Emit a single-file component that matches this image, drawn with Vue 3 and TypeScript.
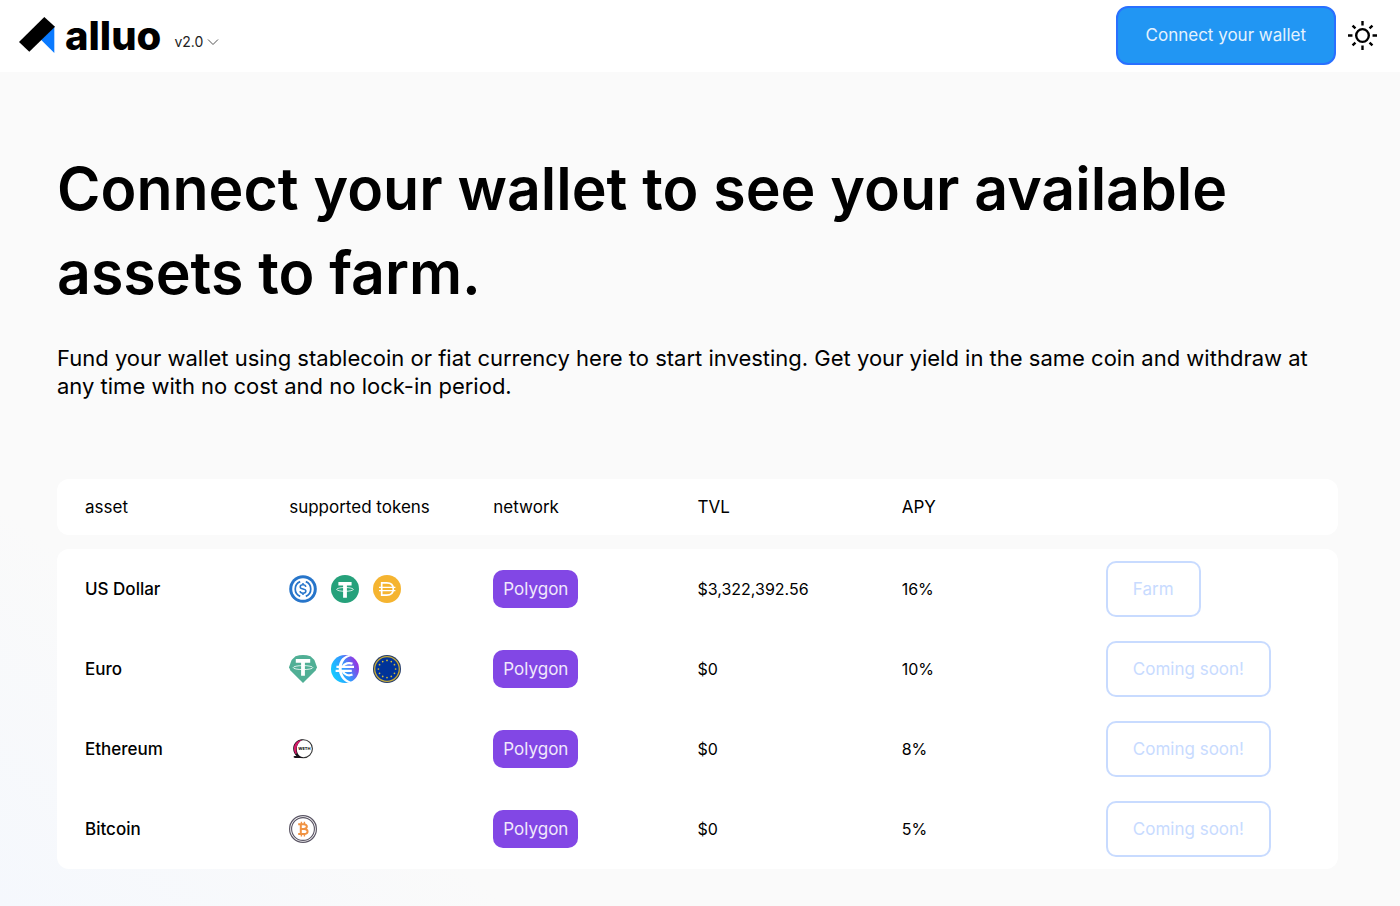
<script setup lang="ts">
type Token = 'usdc' | 'usdt' | 'dai' | 'eurt' | 'eurs' | 'jeur' | 'weth' | 'wbtc'

interface Asset {
  name: string
  tokens: Token[]
  network: string
  tvl: string
  apy: string
  action: string
}

const columns: string[] = ['asset', 'supported tokens', 'network', 'TVL', 'APY', '']

const assets: Asset[] = [
  { name: 'US Dollar', tokens: ['usdc', 'usdt', 'dai'], network: 'Polygon', tvl: '$3,322,392.56', apy: '16%', action: 'Farm' },
  { name: 'Euro', tokens: ['eurt', 'eurs', 'jeur'], network: 'Polygon', tvl: '$0', apy: '10%', action: 'Coming soon!' },
  { name: 'Ethereum', tokens: ['weth'], network: 'Polygon', tvl: '$0', apy: '8%', action: 'Coming soon!' },
  { name: 'Bitcoin', tokens: ['wbtc'], network: 'Polygon', tvl: '$0', apy: '5%', action: 'Coming soon!' },
]

const stars = Array.from({ length: 12 }, (_, i) => {
  const angle = (i * Math.PI) / 6
  return { x: 14 + 8.6 * Math.sin(angle), y: 14 - 8.6 * Math.cos(angle) }
})
</script>

<template>
  <div class="page">
    <header class="topbar">
      <a class="brand" href="#">
        <svg class="mark" viewBox="0 0 36 36" aria-hidden="true">
          <path d="M35.3 9.5V36L22 22.8Z" fill="#0a7aff" />
          <path d="M25.3 0 36 9.7 10.3 34.7 0 25Z" fill="#000" />
        </svg>
        <span class="wordmark">alluo</span>
      </a>
      <button class="version" type="button">
        v2.0
        <svg class="chevron" viewBox="0 0 12 8" aria-hidden="true">
          <path d="M1 1.5 6 6.5 11 1.5" fill="none" stroke="#555" stroke-width="1" />
        </svg>
      </button>
      <button class="connect" type="button">Connect your wallet</button>
      <button class="theme" type="button" aria-label="Toggle theme">
        <svg viewBox="0 0 28 28" aria-hidden="true">
          <g fill="none" stroke="#000" stroke-width="2.3">
            <circle cx="14" cy="14" r="6.1" />
            <path d="M14 0v4.3M14 23.7V28M0 14h4.3M23.7 14H28M4.4 4.4l2.8 2.8M20.8 20.8l2.8 2.8M4.4 23.6l2.8-2.8M20.8 7.2l2.8-2.8" />
          </g>
        </svg>
      </button>
    </header>

    <main class="content">
      <h1>Connect your wallet to see your available assets to farm.</h1>
      <p class="lead">
        Fund your wallet using stablecoin or fiat currency here to start investing. Get your yield in the same coin and
        withdraw at any time with no cost and no lock-in period.
      </p>

      <table class="assets">
        <thead>
          <tr>
            <th v-for="column in columns" :key="column" scope="col">{{ column }}</th>
          </tr>
        </thead>
        <tbody>
          <tr v-for="asset in assets" :key="asset.name">
            <th scope="row">{{ asset.name }}</th>
            <td class="tokens">
              <svg v-for="token in asset.tokens" :key="token" class="token" viewBox="0 0 28 28" aria-hidden="true">
                <template v-if="token === 'usdc'">
                  <circle cx="14" cy="14" r="13.8" fill="#2775ca" />
                  <circle cx="14" cy="14" r="10.8" fill="#fff" />
                  <g fill="none" stroke="#2775ca">
                    <path d="M11.2 6.6a8 8 0 0 0 0 14.8M16.8 6.6a8 8 0 0 1 0 14.8" stroke-width="1.7" />
                    <path d="M16.8 11.8c-.2-1.3-1.2-2-2.8-2-1.7 0-2.8.8-2.8 2.1 0 2.9 5.7 1.3 5.7 4.2 0 1.3-1.2 2.1-2.9 2.1s-2.8-.8-3-2.1M14 7.9v2M14 18.1v2" stroke-width="1.5" />
                  </g>
                </template>
                <template v-else-if="token === 'usdt'">
                  <circle cx="14" cy="14" r="14" fill="#26a17b" />
                  <path d="M7.4 6.9h13.2v3.6h-4.7v12.2h-3.8V10.5H7.4Z" fill="#fff" />
                  <ellipse cx="14" cy="14.4" rx="8.3" ry="1.9" fill="none" stroke="#fff" stroke-width=".8" />
                </template>
                <template v-else-if="token === 'dai'">
                  <circle cx="14" cy="14" r="14" fill="#f5b430" />
                  <g fill="none" stroke="#fff" stroke-width="1.7">
                    <path d="M8.7 7.9h5.1c4.1 0 6.5 2.5 6.5 6.1s-2.4 6.1-6.5 6.1H8.7Z" />
                    <path d="M6 12.4h16.4M6 15.6h16.4" stroke-width="1.3" />
                  </g>
                </template>
                <template v-else-if="token === 'eurt'">
                  <path d="M6.5 1.2Q14-1 21.5 1.2L25.4 5 28 12.2 26.6 15.6 14 28 1.4 15.6 0 12.2 2.6 5Z" fill="#50af95" />
                  <path d="M6.8 4h14.4v3.7h-5.3v13.1h-3.8V7.7H6.8Z" fill="#fff" />
                  <ellipse cx="14" cy="12.6" rx="9.8" ry="2" fill="none" stroke="#fff" stroke-width=".8" />
                </template>
                <template v-else-if="token === 'eurs'">
                  <defs>
                    <linearGradient id="eurs-fill" x1="0" y1=".7" x2="1" y2=".25">
                      <stop offset="0" stop-color="#10cfff" />
                      <stop offset=".5" stop-color="#329bff" />
                      <stop offset="1" stop-color="#a422dc" />
                    </linearGradient>
                  </defs>
                  <circle cx="14" cy="14" r="14" fill="url(#eurs-fill)" />
                  <path d="M18 0C10.2 1.6 7.6 7.6 7.7 13.6c.1 6.6 3.6 12 9.3 14.2 1.8.3 3.2 0 4.6-.7-6.4-1.4-10.7-6-10.9-12.9C10.6 7.8 13.2 2.6 20.5 1Z" fill="#fff" />
                  <path d="M21.5 8.8c-3.7-1.6-8-.6-9.800 3M21.5 19.6c-3.7 1.5-8 .5-9.800-3.300" fill="none" stroke="#fff" stroke-width="2.2" />
                  <path d="M5.4 11.9H23M4.6 15.9h16.2" stroke="#fff" stroke-width="2.2" />
                </template>
                <template v-else-if="token === 'jeur'">
                  <circle cx="14" cy="14" r="14" fill="#263c68" />
                  <circle cx="14" cy="14" r="12.3" fill="#003399" stroke="#c5aa3b" stroke-width="1.3" />
                  <circle v-for="(star, i) in stars" :key="i" :cx="star.x" :cy="star.y" r=".85" fill="#d6bd32" />
                </template>
                <template v-else-if="token === 'weth'">
                  <circle cx="14.4" cy="13.8" r="9" fill="#fff" stroke="#333" stroke-width="1.1" />
                  <path d="M14.5 4.3C8 4 4 8.8 4.2 14c.1 2.7 1.3 5.1 3.2 6.900l-2 .2c-1.4.4-1.2 1.6.6 1.8h8.6C10.3 21.7 7.8 18.5 7.8 14c0-4.4 2.8-8 6.7-9.7Z" fill="#18131a" />
                  <path d="M13 4.9C8 5 4.7 9.2 4.9 14c.1 2 .8 3.9 2 5.3.4-.3.7-.8.9-1.4C6.3 13 8.4 7.5 13 4.900Z" fill="#d51c68" />
                  <text x="15.4" y="15.4" class="weth-label">WETH</text>
                </template>
                <template v-else>
                  <circle cx="14" cy="14" r="13.4" fill="#fff" stroke="#5a5564" stroke-width="1.2" />
                  <circle cx="14" cy="14" r="11.4" fill="none" stroke="#5a5564" stroke-width="1.1" />
                  <g fill="none" stroke="#f09242" stroke-width="2">
                    <path d="M9.2 9.2h5.5c4.3 0 4.1 4.7 0 4.7h-2.5M9.2 19h6c4.6 0 4.4-5.1 0-5.1M11.8 9v10" />
                    <path d="M12.4 6.7V9M15.4 6.7V9M12.4 19v2.5M15.4 19v2.5" stroke-width="1.4" />
                  </g>
                </template>
              </svg>
            </td>
            <td><span class="network">{{ asset.network }}</span></td>
            <td>{{ asset.tvl }}</td>
            <td>{{ asset.apy }}</td>
            <td><button class="action" type="button" disabled>{{ asset.action }}</button></td>
          </tr>
        </tbody>
      </table>
    </main>
  </div>
</template>

<style>
body {
  margin: 0;
}
</style>

<style scoped>
.page {
  box-sizing: border-box;
  min-height: 100vh;
  background: linear-gradient(38deg, #f5f8fd 0%, #fafafa 20%);
  color: #000;
  font-family: Inter, "Liberation Sans", sans-serif;
  font-size: 16px;
}

button {
  font-family: inherit;
  cursor: pointer;
}

.topbar {
  display: flex;
  align-items: center;
  box-sizing: border-box;
  height: 72px;
  padding: 0 23px 2px 19px;
  background: #fff;
}

.brand {
  display: flex;
  align-items: center;
  gap: 10px;
  color: #000;
  text-decoration: none;
}

.mark {
  width: 36px;
  height: 36px;
}

.wordmark {
  padding-top: 2px;
  font-size: 40px;
  font-weight: 800;
  line-height: 48px;
}

.version {
  display: flex;
  align-items: center;
  gap: 4px;
  margin-left: 13px;
  padding: 14px 0 0;
  border: 0;
  background: none;
  color: #222;
  font-size: 14px;
  line-height: 20px;
}

.chevron {
  width: 12px;
  height: 8px;
}

.connect {
  margin-left: auto;
  padding: 17px 28px;
  border: 2px solid #2970ff;
  border-radius: 12px;
  background: #2196f3;
  color: #e4f2fe;
  font-size: 17px;
  line-height: 21px;
}

.theme {
  display: flex;
  margin-left: 12px;
  padding: 0;
  border: 0;
  background: none;
}

.theme svg {
  width: 29px;
  height: 29px;
}

.content {
  padding: 75px 62px 36px 57px;
}

h1 {
  margin: 0;
  font-size: 59px;
  font-weight: 600;
  line-height: 84px;
}

.lead {
  margin: 29px 0 0;
  font-size: 22px;
  line-height: 28px;
}

.assets,
.assets thead,
.assets tbody {
  display: block;
}

.assets {
  margin-top: 79px;
}

.assets thead,
.assets tbody {
  padding: 0 28px;
  border-radius: 12px;
  background: #fff;
}

.assets tbody {
  margin-top: 14px;
}

.assets tr {
  display: grid;
  grid-template-columns: repeat(6, 1fr);
  align-items: center;
  height: 80px;
}

.assets thead tr {
  height: 56px;
}

.assets th,
.assets td {
  padding: 0;
  font-size: 16px;
  font-weight: 400;
  line-height: 24px;
  text-align: left;
}

.assets th {
  font-size: 17px;
}

.assets tbody th {
  font-weight: 500;
}

.assets .tokens {
  display: flex;
  gap: 14px;
}

.token {
  width: 28px;
  height: 28px;
}

.weth-label {
  font-size: 4px;
  font-weight: 700;
  text-anchor: middle;
}

.network {
  display: inline-block;
  padding: 6px 10px;
  border-radius: 10px;
  background: #8247e5;
  color: #f0e8fc;
  font-size: 17px;
  line-height: 26px;
}

.action {
  display: block;
  padding: 15px 25px;
  border: 2px solid #c8dbff;
  border-radius: 10px;
  background: #fff;
  color: #c8dbff;
  font-size: 17px;
  line-height: 22px;
}
</style>
